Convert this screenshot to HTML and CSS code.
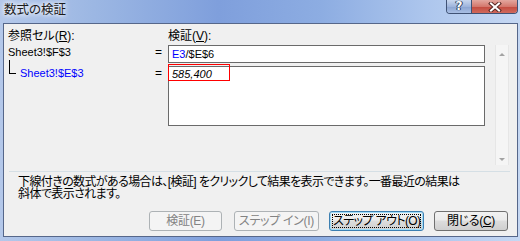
FILE: index.html
```html
<!DOCTYPE html>
<html lang="ja">

<head>
    <meta charset="UTF-8">
    <title>数式の検証</title>
    <link rel="stylesheet" href="styles.css">
</head>

<body>
    <div class="window">
        <div class="titlebar">
            <span class="title">数式の検証</span>
            <div class="caption-buttons">
                <span class="cap-btn help">?</span>
                <span class="cap-btn close">
                    <svg width="14" height="10" viewBox="0 0 14 10">
                        <path d="M3 1.5 L11 8.5 M11 1.5 L3 8.5" stroke="#5a2a26" stroke-width="4" stroke-linecap="square" fill="none"/>
                        <path d="M3 1.5 L11 8.5 M11 1.5 L3 8.5" stroke="#ffffff" stroke-width="2" stroke-linecap="square" fill="none"/>
                    </svg>
                </span>
            </div>
        </div>

        <div class="client">
            <div class="eval-grid">
                <div class="label">参照セル(<u>R</u>):</div>
                <div></div>
                <div class="label">検証(<u>V</u>):</div>
                <div></div>
                <div></div>

                <div class="cell-ref">Sheet3!$F$3</div>
                <div class="eq">=</div>
                <div class="box formula"><span class="blue">E3</span>/$E$6</div>
                <div></div>
                <div class="scrollbar">
                    <span class="arrow up"></span>
                    <span class="arrow down"></span>
                </div>

                <div class="cell-ref child">
                    <span class="tree"></span>
                    <span class="blue">Sheet3!$E$3</span>
                </div>
                <div class="eq">=</div>
                <div class="box result-box">
                    <span class="result">585,400</span>
                    <span class="highlight"></span>
                </div>
            </div>

            <div class="separator"></div>

            <p class="hint">下線付きの数式がある場合は、[検証] をクリックして結果を表示できます。一番最近の結果は<br>斜体で表示されます。</p>

            <div class="actions">
                <button class="btn btn-eval" disabled>検証(E)</button>
                <button class="btn btn-in" disabled>ステップ イン(I)</button>
                <button class="btn btn-out default"><span class="focus">ステップ アウト(O)</span></button>
                <button class="btn btn-close">閉じる(<u>C</u>)</button>
            </div>
        </div>
    </div>
</body>

</html>
```

FILE: styles.css
```css
* {
    margin: 0;
    padding: 0;
    box-sizing: border-box;
}

body {
    width: 520px;
    height: 241px;
    overflow: hidden;
    font-family: "Liberation Sans", "Noto Sans CJK JP", sans-serif;
    font-size: 12px;
    font-feature-settings: "palt";
    color: #000;
}

.window {
    width: 520px;
    height: 241px;
    display: flex;
    flex-direction: column;
    background: linear-gradient(to right, #b4c8ea 0%, #9cb7e3 18%, #7f9fdc 42%, #8dade2 62%, #adc6ed 82%, #c6d8f3 100%);
}

/* title bar */
.titlebar {
    height: 23px;
    display: flex;
    justify-content: space-between;
    align-items: flex-start;
}

.title {
    padding: 3px 0 0 4px;
    font-size: 12.5px;
    line-height: 14px;
    color: #1b1b1b;
    text-shadow: 0 0 4px #fff, 0 0 6px #fff;
}

.caption-buttons {
    display: flex;
    margin-right: 2px;
    border: 1px solid #3f5275;
    border-top: none;
    border-radius: 0 0 4px 4px;
    overflow: hidden;
}

.cap-btn {
    height: 13px;
    display: flex;
    align-items: center;
    justify-content: center;
}

.help {
    width: 25px;
    border-right: 1px solid #3f5275;
    background: linear-gradient(#c9d7ee, #9fb5dc 50%, #8aa3d0 51%, #a9bfe4);
    color: #fff;
    font-family: "DejaVu Sans", sans-serif;
    font-weight: bold;
    font-size: 12px;
    line-height: 13px;
    text-shadow: 0 0 1px #2c3d5c, 0 0 1px #2c3d5c, 1px 0 0 #2c3d5c, -1px 0 0 #2c3d5c;
}

.close {
    width: 45px;
    background: linear-gradient(#e3a79f, #d4786d 50%, #c34a3e 51%, #d0695c);
}

/* client area */
.client {
    flex: 1;
    margin: 0 2px 4px 3px;
    border: 1px solid #56678a;
    background: #f0f0f0;
    padding: 5px 7px 0 4px;
    display: flex;
    flex-direction: column;
}

.eval-grid {
    display: grid;
    grid-template-columns: 147px 13px 317px 10px 14px;
    grid-template-rows: 16px 21px 60px 39px;
}

.label,
.cell-ref,
.eq {
    line-height: 14px;
}

.cell-ref,
.box {
    font-size: 11px;
}

.blue {
    color: #0000ff;
}

.box {
    background: #fff;
    border: 1px solid #6a6a6a;
    line-height: 14px;
    padding: 1px 3px;
}

.formula {
    height: 18px;
}

.result-box {
    position: relative;
    height: 60px;
    padding-top: 0;
}

.result {
    font-style: italic;
}

.highlight {
    position: absolute;
    left: -1px;
    top: -3px;
    width: 62px;
    height: 17px;
    border: 1px solid #ff0000;
}

.child {
    display: flex;
    align-items: flex-start;
    padding-left: 1px;
}

.tree {
    width: 7px;
    height: 14px;
    margin-top: -6px;
    margin-right: 4px;
    border-left: 1px solid #000;
    border-bottom: 1px solid #000;
}

.scrollbar {
    grid-column: 5;
    grid-row: 2 / 5;
    background: #f5f5f5;
    border-left: 1px solid #e6e6e6;
    border-right: 1px solid #e6e6e6;
    display: flex;
    flex-direction: column;
    justify-content: space-between;
    align-items: center;
    padding: 8px 0 4px;
}

.arrow {
    width: 0;
    height: 0;
    border-left: 3px solid transparent;
    border-right: 3px solid transparent;
}

.arrow.up {
    border-bottom: 3px solid #a3a3a3;
}

.arrow.down {
    border-top: 3px solid #a3a3a3;
}

.separator {
    margin-top: 6px;
    height: 1px;
    margin-left: 1px;
    background: #d5dfe5;
}

.hint {
    margin: 4px 0 0 10px;
    line-height: 12px;
    letter-spacing: -0.6px;
    white-space: nowrap;
}

/* buttons */
.actions {
    margin-top: 11px;
    display: flex;
    justify-content: flex-end;
    gap: 10px;
}

.btn {
    height: 20px;
    border: 1px solid #707070;
    border-radius: 3px;
    background: linear-gradient(#f2f2f2, #ebebeb 45%, #dddddd 50%, #cfcfcf);
    font: inherit;
    font-size: 12px;
    line-height: 16px;
    color: #000;
    white-space: nowrap;
    letter-spacing: -0.3px;
}

.btn:disabled {
    border-color: #adb2b5;
    background: #f4f4f4;
    color: #838383;
}

.btn-eval {
    width: 73px;
    margin-right: 2px;
}

.btn-in {
    width: 85px;
}

.btn-out {
    width: 95px;
}

.btn-close {
    width: 74px;
    margin-right: 2px;
}

.btn.default {
    border-color: #3c7fb1;
    box-shadow: inset 0 0 0 1px #9fdcf8;
    padding: 2px;
    letter-spacing: -0.6px;
}

.focus {
    display: block;
    height: 14px;
    line-height: 12px;
    border: 1px dotted #000;
}
```
